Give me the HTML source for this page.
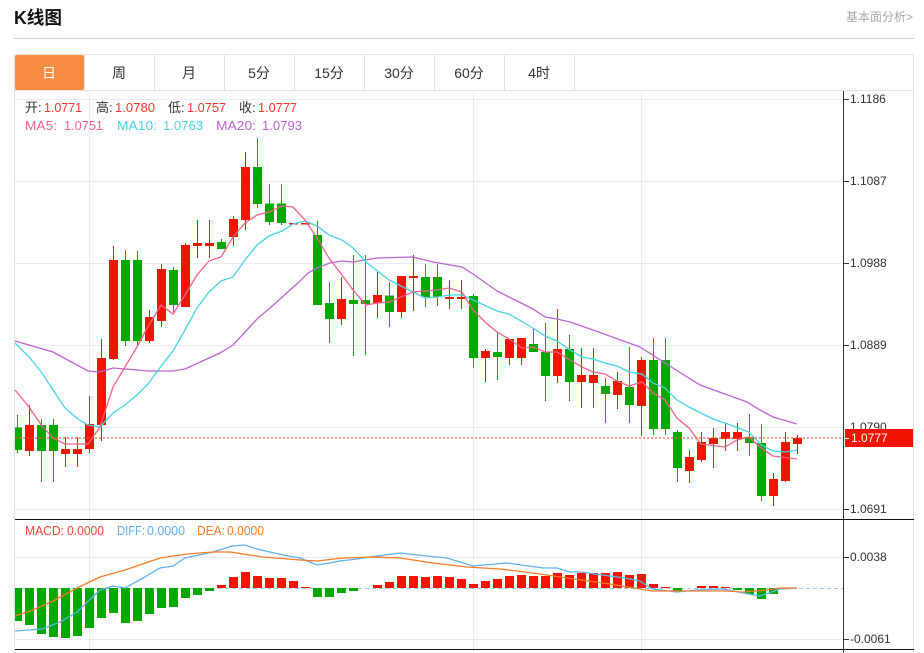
<!DOCTYPE html>
<html lang="zh">
<head>
<meta charset="utf-8">
<title>K线图</title>
<style>
html,body{margin:0;padding:0;background:#fff;width:924px;height:653px;overflow:hidden}
svg{display:block}
text{font-family:"Liberation Sans","Noto Sans CJK SC",sans-serif}
</style>
</head>
<body>
<svg width="924" height="653" viewBox="0 0 924 653" xmlns="http://www.w3.org/2000/svg">
<!-- header -->
<text x="14" y="24" font-size="18" font-weight="700" fill="#111" textLength="48" lengthAdjust="spacingAndGlyphs">K线图</text>
<text x="846" y="21" font-size="12" fill="#a8a8a8" textLength="67" lengthAdjust="spacingAndGlyphs">基本面分析&gt;</text>
<path d="M14 38.5H914" stroke="#d0d0d0" fill="none"/>
<!-- tabs -->
<path d="M14.5 54.5H913.5V90.5H14.5Z" fill="#fff" stroke="#dfe3e6"/>
<path d="M84.5 55V90M154.5 55V90M224.5 55V90M294.5 55V90M364.5 55V90M434.5 55V90M504.5 55V90M574.5 55V90" stroke="#dfe3e6" fill="none"/>
<rect x="15" y="55" width="69" height="35" rx="2" fill="#f58c41"/>
<g font-size="14" fill="#333" text-anchor="middle">
<text x="49" y="78" fill="#fff">日</text>
<text x="119" y="78">周</text>
<text x="189" y="78">月</text>
<text x="259" y="78">5分</text>
<text x="329" y="78">15分</text>
<text x="399" y="78">30分</text>
<text x="469" y="78">60分</text>
<text x="539" y="78">4时</text>
</g>
<!-- frame -->
<path d="M14.5 90V653M913.5 90V653" stroke="#dfe1e4" fill="none"/>
<!-- grid -->
<path d="M15 99.5H843M15 181.5H843M15 263.5H843M15 345.5H843M15 427.5H843M15 509.5H843M15 557.5H843M15 639.5H843M89.5 91V653M473.5 91V653M641.5 91V653" stroke="#e6ecf1" fill="none"/>
<!-- wicks -->
<path fill="none" stroke="#00a800" d="M17.5 415V453M41.5 419V482M53.5 419V482M125.5 250V346M137.5 251V346M173.5 267V312M221.5 239V249M257.5 138V208M269.5 184V225M281.5 184V225M317.5 221V305M329.5 282V343M353.5 255V356M365.5 255V355M389.5 282V327M425.5 264V307M437.5 264V306M473.5 294V368M497.5 332V380M533.5 328V352M545.5 323V401M569.5 335V401M605.5 378V423M629.5 347V423M653.5 338V435M665.5 338V435M677.5 430V482M749.5 414V456M761.5 424V501"/>
<path fill="none" stroke="#f31400" d="M29.5 405V456M65.5 437V467M77.5 437V467M89.5 396V453M101.5 339V441M113.5 246V360M149.5 310V343M161.5 264V327M185.5 243V307M197.5 220V258M209.5 220V258M233.5 216V246M245.5 152V230M341.5 277V325M377.5 272V318M401.5 276V318M413.5 255V311M449.5 280V309M461.5 280V309M485.5 349V382M509.5 339V365M521.5 338V365M557.5 309V383M581.5 348V408M593.5 348V408M617.5 372V409M641.5 357V436M689.5 450V483M701.5 432V462M713.5 428V468M725.5 423V451M737.5 423V451M773.5 473V506M785.5 432V482M797.5 435V454"/>
<!-- bodies -->
<path fill="#00a800" d="M15 427.5h7V450h-7zM37 425h9V451h-9zM49 425h9V451h-9zM121 260h9V341h-9zM133 260h9V341h-9zM169 270h9V305h-9zM217 242h9V249h-9zM253 167h9V204h-9zM265 203.500h9V222h-9zM277 203.500h9V223h-9zM313 235h9V305h-9zM325 303h9V319h-9zM349 300h9V304h-9zM361 300h9V304h-9zM385 295.500h9V312h-9zM421 277h9V297h-9zM433 277h9V297h-9zM469 296h9V358h-9zM493 352h9V357h-9zM529 344h9V352h-9zM541 352h9V376h-9zM565 349h9V382h-9zM601 386h9V394h-9zM625 387h9V405h-9zM649 360h9V429h-9zM661 360h9V429h-9zM673 432h9V468h-9zM745 437h9V443h-9zM757 443h9V496h-9z"/>
<path fill="#f31400" d="M25 425h9V451h-9zM61 449h9V454h-9zM73 449h9V454h-9zM85 424h9V449h-9zM97 358h9V425h-9zM109 260h9V359h-9zM145 317h9V341h-9zM157 269h9V321h-9zM181 245h9V307h-9zM193 243h9V246h-9zM205 243h9V246h-9zM229 219h9V237h-9zM241 167h9V220h-9zM289 223h9v1.500h-9zM301 223h9v1.500h-9zM337 299h9V319h-9zM373 295h9V303h-9zM397 276h9V312h-9zM409 276h9v2h-9zM445 297h9V299h-9zM457 297h9V299h-9zM481 351h9V358h-9zM505 339h9V358h-9zM517 338h9V358h-9zM553 349h9V376h-9zM577 375h9V382h-9zM589 375h9V383h-9zM613 381h9V395h-9zM637 360h9V406h-9zM685 457h9V471h-9zM697 442h9V460h-9zM709 438h9V444h-9zM721 432h9V439h-9zM733 432h9V439h-9zM769 479h9V496h-9zM781 442h9V481h-9zM793 438h9V444h-9z"/>
<!-- MA lines -->
<polyline fill="none" stroke="#bb64cf" stroke-width="1.300" points="15,341 53,352 88,371 100,372 113,368 137,370 148,371 173,371 185,369 220,353 233,345 247,330 258,318 270,308 300,281 308,273 317,268 330,263 342,261 353,262 377,258 413,257 433,262 462,267 473,274 497,291 517,301 533,309 545,317 557,319 570,322 593,330 640,347 673,368 700,385 747,402 760,410 773,417 797,424"/>
<polyline fill="none" stroke="#48d2e4" stroke-width="1.300" points="15,343 29,357 42,373 53,390 65,408 78,419 88,425 100,427 113,413 125,405 137,395 148,384 162,365 173,351 185,330 197,308 209,292 221,281 233,277 245,260 257,245 269,236 282,231 293,224 305,221 317,226 329,235 342,240 353,248 366,262 389,280 413,292 425,298 437,297 450,295 462,295 473,300 497,311 509,314 533,328 545,336 557,341 570,350 582,357 593,359 605,363 617,366 629,372 642,374 653,383 665,388 677,400 689,407 713,419 725,423 749,432 761,445 773,451 785,452 797,450"/>
<polyline fill="none" stroke="#f2608f" stroke-width="1.300" points="15,390 29,407 42,426 53,438 65,444 88,444 100,427 113,387 125,367 137,347 146,330 161,305 173,314 185,295 197,275 209,261 221,257 233,237 245,223 257,215 269,212 282,206 293,207 305,220 317,238 329,258 342,275 353,290 366,305 377,303 389,302 413,292 437,290 449,288 462,292 473,310 485,322 497,332 509,339 522,348 533,347 545,352 557,352 570,360 582,367 593,372 605,374 617,381 629,386 642,382 653,393 665,400 677,418 689,428 701,444 725,447 737,440 749,437 761,448 773,456 797,459"/>
<!-- last price line -->
<path d="M15 438H843" stroke="#f5534a" stroke-width="1.500" stroke-dasharray="2 2" fill="none" opacity=".8"/>
<!-- legend -->
<g font-size="13">
<text x="25" y="112" fill="#333">开:</text>
<text x="44" y="112" fill="#f5352a" textLength="38" lengthAdjust="spacingAndGlyphs">1.0771</text>
<text x="96" y="112" fill="#333">高:</text>
<text x="115" y="112" fill="#f5352a" textLength="40" lengthAdjust="spacingAndGlyphs">1.0780</text>
<text x="168" y="112" fill="#333">低:</text>
<text x="187" y="112" fill="#f5352a" textLength="39" lengthAdjust="spacingAndGlyphs">1.0757</text>
<text x="239" y="112" fill="#333">收:</text>
<text x="258" y="112" fill="#f5352a" textLength="39" lengthAdjust="spacingAndGlyphs">1.0777</text>
<g fill="#f2608f"><text x="25" y="130" textLength="32" lengthAdjust="spacingAndGlyphs">MA5:</text><text x="64" y="130" textLength="39" lengthAdjust="spacingAndGlyphs">1.0751</text></g>
<g fill="#48d2e4"><text x="117" y="130" textLength="40" lengthAdjust="spacingAndGlyphs">MA10:</text><text x="163" y="130" textLength="40" lengthAdjust="spacingAndGlyphs">1.0763</text></g>
<g fill="#bb64cf"><text x="216" y="130" textLength="40" lengthAdjust="spacingAndGlyphs">MA20:</text><text x="262" y="130" textLength="40" lengthAdjust="spacingAndGlyphs">1.0793</text></g>
</g>
<!-- panel borders -->
<path d="M15 519.500H914M15 649.500H914" stroke="#111" fill="none"/>
<!-- MACD zero -->
<path d="M15 588.500H843" stroke="#9fcfe3" stroke-dasharray="4 3" fill="none"/>
<!-- MACD histogram -->
<path fill="#00a800" d="M15 588h7V621h-7zM25 588h9V625h-9zM37 588h9V634h-9zM49 588h9V637h-9zM61 588h9V638h-9zM73 588h9V636h-9zM85 588h9V628h-9zM97 588h9V618h-9zM109 588h9V613h-9zM121 588h9V623h-9zM133 588h9V621h-9zM145 588h9V614h-9zM157 588h9V608h-9zM169 588h9V607h-9zM181 588h9V598h-9zM193 588h9V595h-9zM205 588h9V591h-9zM313 588h9V597h-9zM325 588h9V597h-9zM337 588h9V593h-9zM349 588h9V591h-9zM673 588h9V591h-9zM733 588h9V590h-9zM745 588h9V594h-9zM757 588h9V599h-9zM769 588h9V594h-9z"/>
<path fill="#f31400" d="M217 585h9V588h-9zM229 577h9V588h-9zM241 572h9V588h-9zM253 576h9V588h-9zM265 578h9V588h-9zM277 578h9V588h-9zM289 581h9V588h-9zM301 587h9V588h-9zM373 585h9V588h-9zM385 582h9V588h-9zM397 576h9V588h-9zM409 576h9V588h-9zM421 577h9V588h-9zM433 576h9V588h-9zM445 577h9V588h-9zM457 579h9V588h-9zM469 584h9V588h-9zM481 581h9V588h-9zM493 579h9V588h-9zM505 576h9V588h-9zM517 575h9V588h-9zM529 576h9V588h-9zM541 576h9V588h-9zM553 573h9V588h-9zM565 575h9V588h-9zM577 573h9V588h-9zM589 573h9V588h-9zM601 573h9V588h-9zM613 572h9V588h-9zM625 575h9V588h-9zM637 574h9V588h-9zM649 584h9V588h-9zM661 587h9V588h-9zM697 586h9V588h-9zM709 586h9V588h-9zM721 587h9V588h-9z"/>
<polyline fill="none" stroke="#5fb0f0" stroke-width="1.300" points="15,631 42,629 60,622 77,612 100,590 113,586 125,588 143,578 160,568 173,566 185,558 213,552 232,546 245,545 257,549 283,555 300,558 317,565 330,563 340,561 357,559 377,556 400,553 427,556 447,558 473,566 507,563 543,568 557,568 570,572 580,572 610,576 625,578 640,581 652,589 677,592 697,590 723,589 743,593 760,596 780,589 797,588"/>
<polyline fill="none" stroke="#f67b26" stroke-width="1.300" points="15,616 33,610 53,601 77,588 100,577 125,570 160,558 187,554 213,552 230,552 263,557 300,560 317,561 343,558 373,557 400,558 433,563 467,567 500,569 533,573 567,578 610,584 640,589 652,591 693,591 727,591 743,592 767,590 780,588 797,588"/>
<!-- MACD legend -->
<g font-size="13">
<g fill="#f5443a"><text x="25" y="535" textLength="39" lengthAdjust="spacingAndGlyphs">MACD:</text><text x="67" y="535" textLength="37" lengthAdjust="spacingAndGlyphs">0.0000</text></g>
<g fill="#5fb0f0"><text x="117" y="535" textLength="28" lengthAdjust="spacingAndGlyphs">DIFF:</text><text x="147" y="535" textLength="38" lengthAdjust="spacingAndGlyphs">0.0000</text></g>
<g fill="#f67b26"><text x="197" y="535" textLength="28" lengthAdjust="spacingAndGlyphs">DEA:</text><text x="227" y="535" textLength="37" lengthAdjust="spacingAndGlyphs">0.0000</text></g>
</g>
<!-- axis -->
<path d="M843.500 91V653" stroke="#333" fill="none"/>
<path d="M844 99.500h5M844 181.500h5M844 263.500h5M844 345.500h5M844 509.500h5M844 557.500h5M844 639.500h5" stroke="#333" fill="none"/>
<g font-size="12" fill="#333">
<text x="850" y="103">1.1186</text>
<text x="850" y="185">1.1087</text>
<text x="850" y="267">1.0988</text>
<text x="850" y="349">1.0889</text>
<text x="850" y="431">1.0790</text>
<text x="850" y="513">1.0691</text>
<text x="850" y="561">0.0038</text>
<text x="850" y="643">-0.0061</text>
</g>
<rect x="845" y="429" width="68" height="18" fill="#f31400"/>
<path d="M844 438.500h5" stroke="#fff" fill="none"/>
<text x="851" y="442" font-size="12" fill="#fff">1.0777</text>
</svg>
</body>
</html>
